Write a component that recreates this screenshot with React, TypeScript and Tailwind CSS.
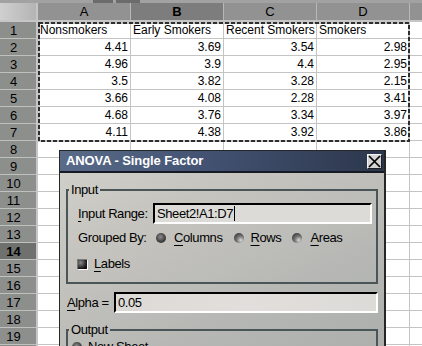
import React from 'react';

const data = [
  ['Nonsmokers', 'Early Smokers', 'Recent Smokers', 'Smokers'],
  ['4.41', '3.69', '3.54', '2.98'],
  ['4.96', '3.9', '4.4', '2.95'],
  ['3.5', '3.82', '3.28', '2.15'],
  ['3.66', '4.08', '2.28', '3.41'],
  ['4.68', '3.76', '3.34', '3.97'],
  ['4.11', '4.38', '3.92', '3.86'],
];

const rows = Array.from({ length: 20 }, (_, i) => i + 1);

function Row({ n }: { n: number }) {
  const vals = data[n - 1];
  const active = n === 14;
  return (
    <div className="flex h-[17px]">
      <div className="w-[38px] shrink-0 border-r-2 border-[#c6c6c6]">
        <div
          className={`h-full border-b border-[#bfc1bf] text-[13px] leading-[15px] pt-[1px] ${
            active ? 'bg-[#6f716f] font-bold' : 'bg-[#8d8f8d]'
          }`}
        >
          {/* row 20 only shows its top edge */}
          <div className="w-[27px] text-center">{n < 20 ? n : ''}</div>
        </div>
      </div>
      {[0, 1, 2, 3].map((i) => (
        <div
          key={i}
          className={`w-[93px] shrink-0 border-r border-b border-[#c4c4c4] text-[12px] leading-[15px] pt-[1px] px-[2px] whitespace-nowrap overflow-hidden ${
            n === 1 ? 'text-left' : 'text-right'
          }`}
        >
          {vals?.[i]}
        </div>
      ))}
      <div className="flex-1 border-b border-[#c4c4c4]" />
    </div>
  );
}

function Radio({ on }: { on?: boolean }) {
  return (
    <span
      className={`inline-block w-[10px] h-[10px] rounded-full shrink-0 ${
        on
          ? 'bg-[radial-gradient(circle_at_45%_40%,#8e8e8e,#424242_55%,#1c1c1c)]'
          : 'bg-[radial-gradient(circle_at_68%_72%,#d8d8d8,#727272_42%,#2c2c2c_92%)]'
      }`}
    />
  );
}

const U = ({ children }: { children: React.ReactNode }) => (
  <span className="underline underline-offset-[3px]">{children}</span>
);

export default function App() {
  return (
    <div className="relative w-[422px] h-[346px] overflow-hidden bg-white text-black font-['Liberation_Sans',Arial,sans-serif]">
      {/* toolbar edge */}
      <div className="flex h-[3px] bg-[#a2a2a2]">
        <div className="w-[93px]" />
        <div className="w-[20px] bg-[#6c6c6c]" />
        <div className="w-[3px]" />
        <div className="w-[24px] bg-[#6c6c6c]" />
      </div>

      {/* column headers */}
      <div className="flex h-[19px] border-b-2 border-[#c6c6c6]">
        <div className="w-[38px] shrink-0 border-r-2 border-[#c6c6c6] bg-[linear-gradient(90deg,#d0d0d0,#b4b4b4)]" />
        {['A', 'B', 'C', 'D'].map((c) => (
          <div
            key={c}
            className={`w-[93px] shrink-0 border-r border-[#b8b8b8] text-center text-[13px] leading-[15px] pt-[1px] ${
              c === 'B' ? 'bg-[#7d7d7d] font-bold' : 'bg-[#929292]'
            }`}
          >
            {c}
          </div>
        ))}
        <div className="flex-1 bg-[#929292]" />
      </div>

      {rows.map((n) => (
        <Row key={n} n={n} />
      ))}

      {/* selection marquee */}
      <svg className="absolute left-[38px] top-[22px]" width="372" height="120">
        <rect x="1" y="1" width="370" height="118" fill="none" stroke="#c4c4c4" strokeWidth="2" />
        <rect x="1" y="1" width="370" height="118" fill="none" stroke="#2e2e2e" strokeWidth="2" strokeDasharray="4 2" />
      </svg>

      {/* dialog */}
      <div className="absolute left-[59px] top-[150px] w-[327px] h-[210px] border border-[#262626] border-r-2 bg-[linear-gradient(155deg,#d3d1cc_0%,#c6c4bf_30%,#bcbcb8_55%,#b2b4b1_80%,#abaeab_100%)] text-[13px] tracking-[-0.4px]">
        <div className="h-[22px] border-b-2 border-[#151a24] bg-[linear-gradient(90deg,#5a6b89,#435272_45%,#2c374c)] flex items-center justify-between pl-[6px] pr-[2px]">
          <span className="text-white font-bold text-[13px] tracking-[-0.1px]">ANOVA - Single Factor</span>
          <div className="w-[15px] h-[15px] bg-[#d4d4d4] border border-[#1e1e1e] border-t-[#f4f4f4] border-l-[#f4f4f4] flex items-center justify-center">
            <svg width="13" height="13" viewBox="0 0 13 13">
              <path d="M1 1L12 12M12 1L1 12" stroke="#000" strokeWidth="1.7" />
            </svg>
          </div>
        </div>

        <div className="px-[6px]">
          <fieldset className="mt-[10px] border-2 border-[#4a5557] p-0">
            <legend className="ml-[1px] px-[2px] leading-[14px]">Input</legend>
            <div className="pl-[10px] pr-[4px] pt-[6px] pb-[9px]">
              <div className="flex items-center h-[21px]">
                <span className="w-[75px] shrink-0">
                  <U>I</U>nput Range:
                </span>
                <div className="w-[219px] h-[21px] border-2 border-t-black border-l-black border-r-white border-b-white bg-[#dddbd7] flex items-center pl-[2px]">
                  <span>Sheet2!A1:D7</span>
                  <span className="ml-[1px] w-[1px] h-[15px] bg-black" />
                </div>
              </div>
              <div className="flex items-center h-[18px] mt-[5px]">
                <span className="w-[78px] shrink-0">Grouped By:</span>
                <Radio on />
                <span className="ml-[8px]">
                  <U>C</U>olumns
                </span>
                <span className="ml-[11px] flex items-center">
                  <Radio />
                </span>
                <span className="ml-[7px]">
                  <U>R</U>ows
                </span>
                <span className="ml-[11px] flex items-center">
                  <Radio />
                </span>
                <span className="ml-[8px]">
                  <U>A</U>reas
                </span>
              </div>
              <div className="flex items-center h-[18px] mt-[8px]">
                <span className="ml-[-1px] w-[11px] h-[11px] border border-t-[#7a7a7a] border-l-[#7a7a7a] border-r-white border-b-white bg-[radial-gradient(circle_at_30%_30%,#8a8a8a,#151515_70%)]" />
                <span className="ml-[6px]">
                  <U>L</U>abels
                </span>
              </div>
            </div>
          </fieldset>

          <div className="flex items-center h-[21px] mt-[8px]">
            <span className="w-[48px] shrink-0 pl-[1px]">
              <U>A</U>lpha =
            </span>
            <div className="flex-1 h-[21px] border-2 border-t-black border-l-black border-r-white border-b-white bg-[linear-gradient(100deg,#dcdad6,#e2dedb_50%,#dcdbd7)] flex items-center pl-[2px]">
              0.05
            </div>
          </div>

          <fieldset className="mt-[10px] border-2 border-[#4a5557] p-0">
            <legend className="ml-[1px] px-[2px] leading-[14px]">Output</legend>
            <div className="pl-[4px] pt-[1px] pb-[20px]">
              <div className="flex items-center h-[18px]">
                <Radio on />
                <span className="ml-[6px]">
                  <U>N</U>ew Sheet
                </span>
              </div>
            </div>
          </fieldset>
        </div>
      </div>
    </div>
  );
}
